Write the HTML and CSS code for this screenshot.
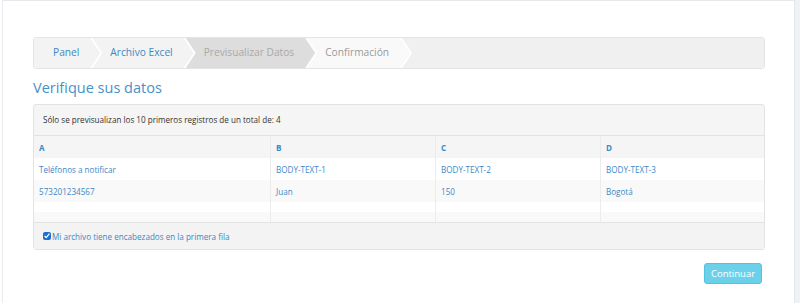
FILE: index.html
```html
<!DOCTYPE html>
<html lang="es">
<head>
    <meta charset="UTF-8">
    <title>Previsualizar Datos</title>
    <link rel="stylesheet" href="styles.css">
</head>
<body>

<div class="frame">
    <div class="page">
        <div class="crumbs">
            <a class="crumb first done" href="#">Panel</a>
            <a class="crumb done" href="#">Archivo Excel</a>
            <span class="crumb active">Previsualizar Datos</span>
            <span class="crumb next">Confirmación</span>
            <span class="crumb filler"></span>
        </div>

        <h3 class="title">Verifique sus datos</h3>

        <div class="panel">
            <div class="panel-head">Sólo se previsualizan los 10 primeros registros de un total de: 4</div>
            <table class="preview">
                <thead>
                    <tr><th class="col-a">A</th><th class="col-b">B</th><th class="col-c">C</th><th>D</th></tr>
                </thead>
                <tbody>
                    <tr><td>Teléfonos a notificar</td><td>BODY-TEXT-1</td><td>BODY-TEXT-2</td><td>BODY-TEXT-3</td></tr>
                    <tr><td>573201234567</td><td>Juan</td><td>150</td><td>Bogotá</td></tr>
                    <tr class="empty"><td></td><td></td><td></td><td></td></tr>
                    <tr class="empty"><td></td><td></td><td></td><td></td></tr>
                </tbody>
            </table>
            <div class="panel-foot">
                <label><input type="checkbox" checked>Mi archivo tiene encabezados en la primera fila</label>
            </div>
        </div>

        <div class="actions">
            <button type="button" class="btn-next">Continuar</button>
        </div>
    </div>
    <div class="side"></div>
</div>

</body>
</html>
```

FILE: styles.css
```css
html, body {
    margin: 0;
    padding: 0;
    background: #fff;
    font-family: 'Open Sans', sans-serif;
    color: #333;
}
.frame {
    display: flex;
    height: 303px;
}
.page {
    width: 793px;
    margin-left: 2px;
    border-left: 1px solid #e9ebee;
    border-top: 1px solid #e6e9ec;
    border-right: 1px solid #e3e6ea;
    padding: 36px 29px 0 30px;
    box-sizing: border-box;
}
.side {
    flex: 1;
    background: #eef1f5;
}

/* pasos */
.crumbs {
    display: flex;
    height: 30px;
    background: #fff;
    border: 1px solid #e4e4e4;
    border-radius: 3px;
    overflow: hidden;
}
.crumb {
    display: block;
    height: 100%;
    line-height: 29px;
    font-size: 10.2px;
    text-decoration: none;
    padding: 0 21px 0 18px;
    margin-left: -8px;
    clip-path: polygon(0 0, calc(100% - 10px) 0, 100% 50%, calc(100% - 10px) 100%, 0 100%, 10px 50%);
}
.crumb.first {
    margin-left: 0;
    padding-left: 19px;
    clip-path: polygon(0 0, calc(100% - 10px) 0, 100% 50%, calc(100% - 10px) 100%, 0 100%);
}
.crumb.done {
    background: #f3f3f3;
    color: #3d88c6;
}
.crumb.active {
    background: #dddddd;
    color: #a9a9a9;
}
.crumb.next {
    background: #f9f9f9;
    color: #9a9a9a;
}
.crumb.filler {
    flex: 1;
    background: #f0f0f0;
    clip-path: polygon(0 0, 100% 0, 100% 100%, 0 100%, 10px 50%);
}

.title {
    margin: 8px 0 5px;
    font-size: 14.5px;
    font-weight: 400;
    line-height: 22px;
    color: #4591c9;
}

/* panel */
.panel {
    background: #f5f5f5;
    border: 1px solid #e3e3e3;
    border-radius: 3px;
}
.panel-head {
    height: 30px;
    line-height: 29px;
    padding-left: 9px;
    font-size: 8.1px;
    color: #333;
}
.preview {
    width: 100%;
    border-collapse: collapse;
    font-size: 8.1px;
    color: #3d88c6;
}
.preview th, .preview td {
    text-align: left;
    height: 22px;
    padding: 0 5px;
    border-left: 1px solid #ececec;
}
.preview th:first-child, .preview td:first-child {
    border-left: none;
}
.preview th {
    font-weight: 700;
    background: #f5f5f5;
    border-top: 1px solid #e3e3e3;
}
.col-a { width: 226px; }
.col-b { width: 154px; }
.col-c { width: 154px; }
.preview tbody tr { background: #fff; }
.preview tbody tr:nth-child(even) { background: #f9f9f9; }
.preview tr.empty td { height: 10px; }
.panel-foot {
    height: 26px;
    padding-left: 9px;
    display: flex;
    align-items: center;
    border-top: 1px solid #e3e3e3;
    background: #f3f3f3;
    font-size: 8.1px;
    color: #3d88c6;
}
.panel-foot label {
    display: flex;
    align-items: center;
}
.panel-foot input {
    width: 8px;
    height: 8px;
    margin: 0 1px 0 0;
    accent-color: #1a6fd0;
}

.actions {
    display: flex;
    justify-content: flex-end;
    padding: 13px 3px 0 0;
}
.btn-next {
    width: 58px;
    height: 21px;
    padding: 0;
    font-family: 'Open Sans', sans-serif;
    font-size: 9.5px;
    color: #fff;
    background: #6bd1ea;
    border: 1px solid #55c3e0;
    border-radius: 3px;
}
```
